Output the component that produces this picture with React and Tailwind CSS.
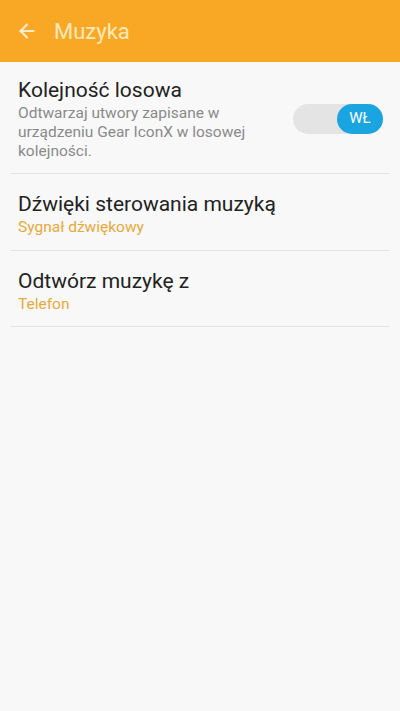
import { ArrowLeft } from 'lucide-react'

const font = { fontFamily: 'Roboto, "Noto Sans", sans-serif' }

function Row({ title, sub, accent, pad, children }) {
  return (
    <div className="mx-[11px] border-b border-[#e2e2e2]">
      <div className={`flex items-center px-[7px] ${pad}`}>
        <div className="flex-1">
          <div className="text-[21px] leading-[28px] text-[#222]">{title}</div>
          <div
            className={`text-[15.5px] leading-[19px] ${accent ? 'text-[#e8a93a]' : 'text-[#8a8a8a] pr-[30px]'}`}
          >
            {sub}
          </div>
        </div>
        {children}
      </div>
    </div>
  )
}

export default function App() {
  return (
    <div className="w-[400px] h-[711px] bg-[#f8f8f8]" style={font}>
      <div className="h-[62px] bg-[#f9a826] flex items-center pl-[16px]">
        <ArrowLeft size={22} strokeWidth={2.4} className="text-[#fdeccb]" />
        <span className="ml-[16px] text-[22px] text-[#fde8bb]">Muzyka</span>
      </div>
      <Row
        title="Kolejność losowa"
        sub="Odtwarzaj utwory zapisane w urządzeniu Gear IconX w losowej kolejności."
        pad="pt-[14px] pb-[12px]"
      >
        <div className="w-[90px] h-[30px] rounded-full bg-[#e4e4e4] flex justify-end mr-[-1px]">
          <div className="w-[46px] h-[30px] rounded-full bg-[#1ba5e0] flex items-center justify-center text-white text-[15px]">
            WŁ
          </div>
        </div>
      </Row>
      <Row title="Dźwięki sterowania muzyką" sub="Sygnał dźwiękowy" accent pad="pt-[16px] pb-[13px]" />
      <Row title="Odtwórz muzykę z" sub="Telefon" accent pad="pt-[16px] pb-[12px]" />
    </div>
  )
}
